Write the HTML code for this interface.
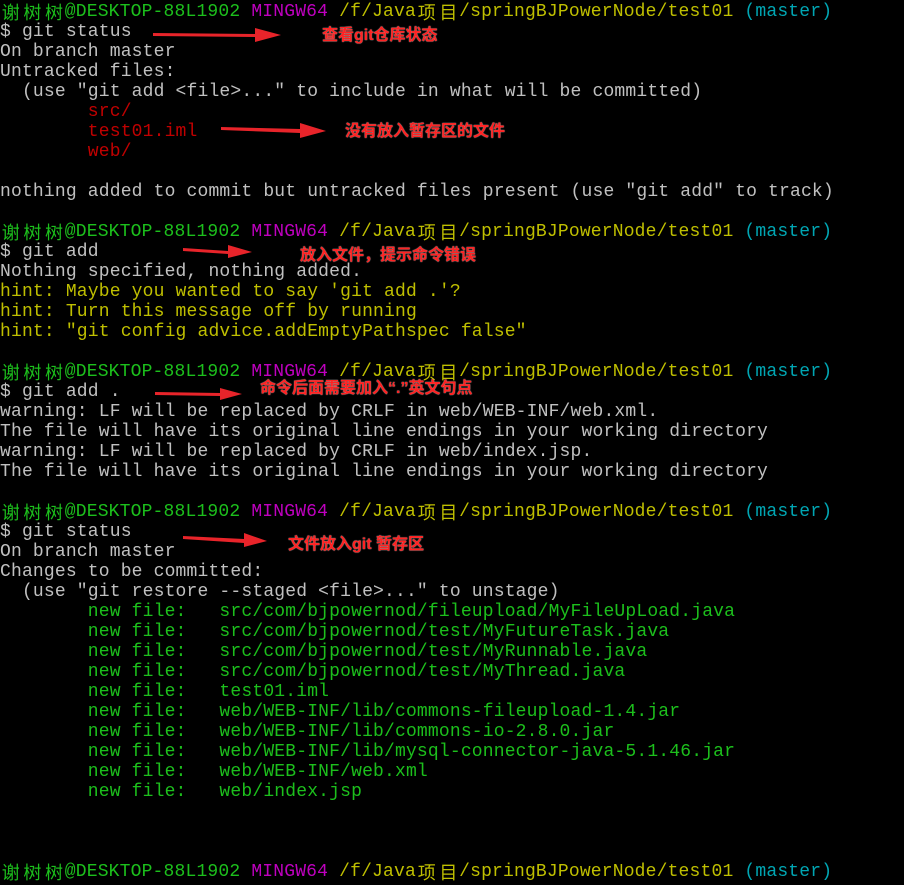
<!DOCTYPE html>
<html><head><meta charset="utf-8">
<style>
html,body{margin:0;padding:0;background:#000;}
body{width:904px;height:846px;overflow:hidden;position:relative;}
#t{position:absolute;left:0;top:2px;font-family:"Liberation Mono","Noto Sans CJK SC",monospace;font-size:18px;line-height:20px;color:#c0c0c0;letter-spacing:0.17px;}
.l{height:20px;white-space:pre;overflow:visible;}
.g{color:#1cbf1c}.m{color:#bf00bf}.y{color:#bfbf00}.c{color:#00a6b3}.r{color:#c00000}
.k{display:inline-block;width:21.6px;height:20px;vertical-align:top;text-align:center;font-family:"Noto Sans CJK SC",sans-serif;font-size:18px;line-height:20px;letter-spacing:0;}
.note{position:absolute;color:#ff2222;font-family:"Liberation Sans","Noto Sans CJK SC",sans-serif;font-weight:bold;font-size:16px;line-height:18px;white-space:nowrap;text-shadow:0 0 1px #fff;}
svg{position:absolute;left:0;top:0;}
</style></head><body>
<div id="t"><div class="l"><span class="g"><span class="k">谢</span><span class="k">树</span><span class="k">树</span>@DESKTOP-88L1902</span> <span class="m">MINGW64</span> <span class="y">/f/Java<span class="k">项</span><span class="k">目</span>/springBJPowerNode/test01</span> <span class="c">(master)</span></div><div class="l">$ git status</div><div class="l">On branch master</div><div class="l">Untracked files:</div><div class="l">  (use "git add &lt;file&gt;..." to include in what will be committed)</div><div class="l r">        src/</div><div class="l r">        test01.iml</div><div class="l r">        web/</div><div class="l"></div><div class="l">nothing added to commit but untracked files present (use "git add" to track)</div><div class="l"></div><div class="l"><span class="g"><span class="k">谢</span><span class="k">树</span><span class="k">树</span>@DESKTOP-88L1902</span> <span class="m">MINGW64</span> <span class="y">/f/Java<span class="k">项</span><span class="k">目</span>/springBJPowerNode/test01</span> <span class="c">(master)</span></div><div class="l">$ git add</div><div class="l">Nothing specified, nothing added.</div><div class="l y">hint: Maybe you wanted to say 'git add .'?</div><div class="l y">hint: Turn this message off by running</div><div class="l y">hint: "git config advice.addEmptyPathspec false"</div><div class="l"></div><div class="l"><span class="g"><span class="k">谢</span><span class="k">树</span><span class="k">树</span>@DESKTOP-88L1902</span> <span class="m">MINGW64</span> <span class="y">/f/Java<span class="k">项</span><span class="k">目</span>/springBJPowerNode/test01</span> <span class="c">(master)</span></div><div class="l">$ git add .</div><div class="l">warning: LF will be replaced by CRLF in web/WEB-INF/web.xml.</div><div class="l">The file will have its original line endings in your working directory</div><div class="l">warning: LF will be replaced by CRLF in web/index.jsp.</div><div class="l">The file will have its original line endings in your working directory</div><div class="l"></div><div class="l"><span class="g"><span class="k">谢</span><span class="k">树</span><span class="k">树</span>@DESKTOP-88L1902</span> <span class="m">MINGW64</span> <span class="y">/f/Java<span class="k">项</span><span class="k">目</span>/springBJPowerNode/test01</span> <span class="c">(master)</span></div><div class="l">$ git status</div><div class="l">On branch master</div><div class="l">Changes to be committed:</div><div class="l">  (use "git restore --staged &lt;file&gt;..." to unstage)</div><div class="l g">        new file:   src/com/bjpowernod/fileupload/MyFileUpLoad.java</div><div class="l g">        new file:   src/com/bjpowernod/test/MyFutureTask.java</div><div class="l g">        new file:   src/com/bjpowernod/test/MyRunnable.java</div><div class="l g">        new file:   src/com/bjpowernod/test/MyThread.java</div><div class="l g">        new file:   test01.iml</div><div class="l g">        new file:   web/WEB-INF/lib/commons-fileupload-1.4.jar</div><div class="l g">        new file:   web/WEB-INF/lib/commons-io-2.8.0.jar</div><div class="l g">        new file:   web/WEB-INF/lib/mysql-connector-java-5.1.46.jar</div><div class="l g">        new file:   web/WEB-INF/web.xml</div><div class="l g">        new file:   web/index.jsp</div><div class="l"></div><div class="l"></div><div class="l"></div><div class="l"><span class="g"><span class="k">谢</span><span class="k">树</span><span class="k">树</span>@DESKTOP-88L1902</span> <span class="m">MINGW64</span> <span class="y">/f/Java<span class="k">项</span><span class="k">目</span>/springBJPowerNode/test01</span> <span class="c">(master)</span></div></div>
<svg width="904" height="846">
<g fill="#e8242a">
<polygon points="153,33 255,34 255,28 281,35 255,42 255,37 153,36"/>
<polygon points="221,127 300,129 300,123 326,131 300,138 300,133 221,130"/>
<polygon points="183,248 228,251 228,245 252,252 228,258 228,254 183,251"/>
<polygon points="155,392 220,393 220,388 242,394 220,400 220,396 155,395"/>
<polygon points="183,536 244,539 244,533 267,541 244,547 244,543 183,539"/>
</g>
</svg>
<div class="note" style="left:322px;top:27px;">查看git仓库状态</div>
<div class="note" style="left:345px;top:123px;">没有放入暂存区的文件</div>
<div class="note" style="left:300px;top:247px;">放入文件，提示命令错误</div>
<div class="note" style="left:260px;top:380px;">命令后面需要加入“.”英文句点</div>
<div class="note" style="left:288px;top:536px;">文件放入git 暂存区</div>
</body></html>
